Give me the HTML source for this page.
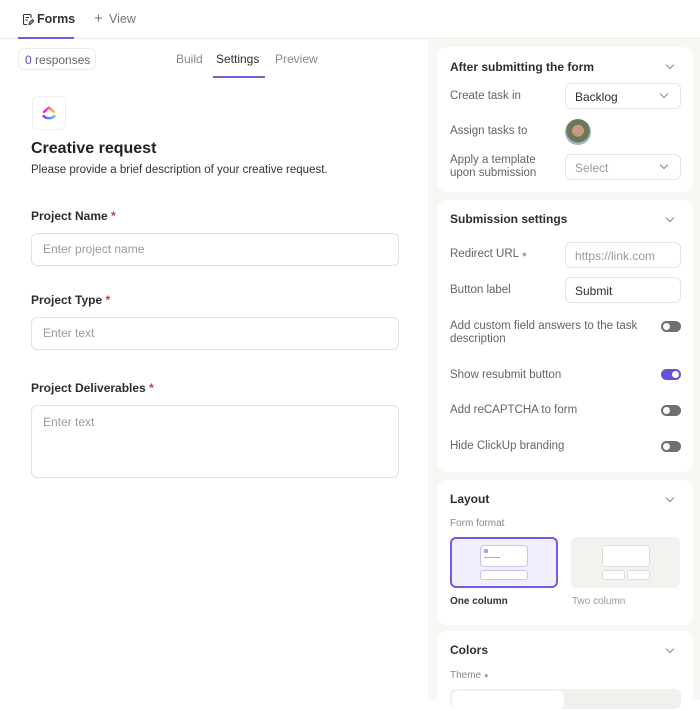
<!DOCTYPE html>
<html><head><style>
*{box-sizing:border-box;margin:0;padding:0}
body{width:700px;height:700px;overflow:hidden;background:#fff;font-family:"Liberation Sans",sans-serif;position:relative;color:#2a2e34}
.a{position:absolute}
.card{position:absolute;left:437px;width:256px;background:#fff;border-radius:10px}
.h{font-size:12px;font-weight:bold;color:#2a2e34}
.lbl{font-size:11.5px;color:#646464}
.inp{position:absolute;border:1px solid #e3e3e3;border-radius:6px;background:#fff;font-size:12px}
.chev{position:absolute;width:6px;height:6px;border-right:1.3px solid #888;border-bottom:1.3px solid #888;transform:rotate(45deg)}
.tg{position:absolute;left:661px;width:20px;height:11px;border-radius:6px;background:#6f6f6f}
.tg::after{content:"";position:absolute;left:2px;top:2px;width:7px;height:7px;border-radius:50%;background:#fff}
.tg.on{background:#6552d8}.tg.on::after{left:11px}
.fl{position:absolute;left:31px;font-size:12px;font-weight:bold;color:#2a2e34}
.fl b{color:#d8343a}
.fi{position:absolute;left:31px;width:368px;border:1px solid #e1e1e1;border-radius:6px;font-size:12px;color:#9a9a9a;padding-left:11px}
</style></head><body>
<div class="a" style="left:0;top:0;width:700px;height:39px;border-bottom:1px solid #eeece8"></div>
<svg class="a" style="left:22px;top:13px" width="12" height="13" viewBox="0 0 12 13"><path d="M9 5V2.5A1 1 0 0 0 8 1.5H2.5A1 1 0 0 0 1.5 2.5v8a1 1 0 0 0 1 1H5M3.5 4.5h3.5M3.5 7h2.5M7 11.5l.4-1.8 3-3 1.3 1.3-3 3z" fill="none" stroke="#333" stroke-width="1.1"/></svg>
<div class="a" style="left:37px;top:12px;font-size:12.5px;font-weight:bold;color:#333">Forms</div>
<div class="a" style="left:18px;top:37px;width:56px;height:2px;background:#6b5ee0"></div>
<div class="a" style="left:94px;top:10px;font-size:15px;color:#777">+</div>
<div class="a" style="left:109px;top:12px;font-size:12.5px;color:#777">View</div>
<div class="a" style="left:428px;top:40px;width:272px;height:660px;background:#f8f7f3"></div>
<div class="a" style="left:18px;top:48px;width:78px;height:22px;border:1px solid #eeece8;border-radius:6px;font-size:12px;color:#666;padding:4px 0 0 6px"><span style="color:#5b50d6">0</span> responses</div>
<div class="a" style="left:176px;top:52px;font-size:12px;color:#888">Build</div>
<div class="a" style="left:216px;top:52px;font-size:12px;color:#2a2e34">Settings</div>
<div class="a" style="left:213px;top:76px;width:52px;height:2px;background:#6b5ee0"></div>
<div class="a" style="left:275px;top:52px;font-size:12px;color:#888">Preview</div>
<div class="a" style="left:32px;top:96px;width:34px;height:34px;border:1px solid #efefef;border-radius:6px"></div>
<svg class="a" style="left:40px;top:104px" width="18" height="18" viewBox="0 0 18 18"><defs><linearGradient id="g1" x1="0" x2="1"><stop offset="0" stop-color="#ff02f0"/><stop offset="1" stop-color="#ffc800"/></linearGradient><linearGradient id="g2" x1="0" x2="1"><stop offset="0" stop-color="#8930fd"/><stop offset="1" stop-color="#49ccf9"/></linearGradient></defs><path d="M4 8l5-4.5 5 4.5" fill="none" stroke="url(#g1)" stroke-width="2.3" stroke-linecap="round"/><path d="M3.5 12c3 3 8 3 11 0" fill="none" stroke="url(#g2)" stroke-width="2.3" stroke-linecap="round"/></svg>
<div class="a" style="left:31px;top:140px;font-size:16px;font-weight:bold;color:#1f2124">Creative request</div>
<div class="a" style="left:31px;top:164px;font-size:11.5px;color:#333">Please provide a brief description of your creative request.</div>
<div class="fl" style="top:209px">Project Name <b>*</b></div>
<div class="fi" style="top:233px;height:33px;line-height:31px">Enter project name</div>
<div class="fl" style="top:293px">Project Type <b>*</b></div>
<div class="fi" style="top:317px;height:33px;line-height:31px">Enter text</div>
<div class="fl" style="top:381px">Project Deliverables <b>*</b></div>
<div class="fi" style="top:405px;height:73px;padding-top:9px">Enter text</div>

<div class="card" style="top:47px;height:145px"></div>
<div class="a h" style="left:450px;top:60px">After submitting the form</div>
<div class="chev" style="left:667px;top:62px"></div>
<div class="a lbl" style="left:450px;top:90px">Create task in</div>
<div class="inp" style="left:565px;top:83px;width:116px;height:26px;padding:6px 0 0 9px;color:#2a2e34">Backlog</div>
<div class="chev" style="left:661px;top:91px"></div>
<div class="a lbl" style="left:450px;top:125px">Assign tasks to</div>
<div class="a" style="left:565px;top:119px;width:26px;height:26px;border-radius:50%;background:radial-gradient(circle at 50% 45%,#c99a80 0 30%,#6b7a55 31% 60%,#a0b4c8 61%)"></div>
<div class="a lbl" style="left:450px;top:154px;line-height:13px">Apply a template<br>upon submission</div>
<div class="inp" style="left:565px;top:154px;width:116px;height:26px;padding:6px 0 0 9px;color:#9a9a9a">Select</div>
<div class="chev" style="left:661px;top:162px"></div>

<div class="card" style="top:200px;height:272px"></div>
<div class="a h" style="left:450px;top:212px">Submission settings</div>
<div class="chev" style="left:667px;top:215px"></div>
<div class="a lbl" style="left:450px;top:248px">Redirect URL <span style="color:#aaa;font-size:9px">●</span></div>
<div class="inp" style="left:565px;top:242px;width:116px;height:26px;padding:6px 0 0 9px;color:#9a9a9a">https://link.com</div>
<div class="a lbl" style="left:450px;top:284px">Button label</div>
<div class="inp" style="left:565px;top:277px;width:116px;height:26px;padding:6px 0 0 9px;color:#2a2e34">Submit</div>
<div class="a lbl" style="left:450px;top:320px;line-height:13px">Add custom field answers to the task<br>description</div>
<div class="tg" style="top:321px"></div>
<div class="a lbl" style="left:450px;top:369px">Show resubmit button</div>
<div class="tg on" style="top:369px"></div>
<div class="a lbl" style="left:450px;top:404px">Add reCAPTCHA to form</div>
<div class="tg" style="top:405px"></div>
<div class="a lbl" style="left:450px;top:440px">Hide ClickUp branding</div>
<div class="tg" style="top:441px"></div>

<div class="card" style="top:480px;height:145px"></div>
<div class="a h" style="left:450px;top:492px">Layout</div>
<div class="chev" style="left:667px;top:495px"></div>
<div class="a" style="left:450px;top:518px;font-size:10px;color:#888">Form format</div>
<div class="a" style="left:450px;top:537px;width:108px;height:51px;border:2px solid #6b5ee0;border-radius:6px;background:#f1effe"></div>
<div class="a" style="left:480px;top:545px;width:48px;height:22px;border:1px solid #c9c2f5;border-radius:4px;background:#fff"></div>
<div class="a" style="left:484px;top:549px;width:4px;height:4px;background:#a99cf2;border-radius:1px"></div>
<div class="a" style="left:484px;top:557px;width:16px;height:1px;background:#a99cf2"></div>
<div class="a" style="left:480px;top:570px;width:48px;height:10px;border:1px solid #c9c2f5;border-radius:3px;background:#fff"></div>
<div class="a" style="left:571px;top:537px;width:109px;height:51px;border-radius:6px;background:#f3f2ef"></div>
<div class="a" style="left:602px;top:545px;width:48px;height:22px;border:1px solid #dcdcdc;border-radius:4px;background:#fff"></div>
<div class="a" style="left:602px;top:570px;width:23px;height:10px;border:1px solid #dcdcdc;border-radius:3px;background:#fff"></div>
<div class="a" style="left:627px;top:570px;width:23px;height:10px;border:1px solid #dcdcdc;border-radius:3px;background:#fff"></div>
<div class="a" style="left:450px;top:596px;font-size:10px;font-weight:bold;color:#333">One column</div>
<div class="a" style="left:572px;top:596px;font-size:10px;color:#999">Two column</div>

<div class="card" style="top:631px;height:80px"></div>
<div class="a h" style="left:450px;top:643px">Colors</div>
<div class="chev" style="left:667px;top:646px"></div>
<div class="a" style="left:450px;top:670px;font-size:10px;color:#888">Theme <span style="color:#aaa;font-size:8px">●</span></div>
<div class="a" style="left:450px;top:689px;width:231px;height:20px;border-radius:6px;background:#f1f0ed"></div>
<div class="a" style="left:452px;top:691px;width:112px;height:18px;border-radius:5px;background:#fff"></div>
</body></html>
